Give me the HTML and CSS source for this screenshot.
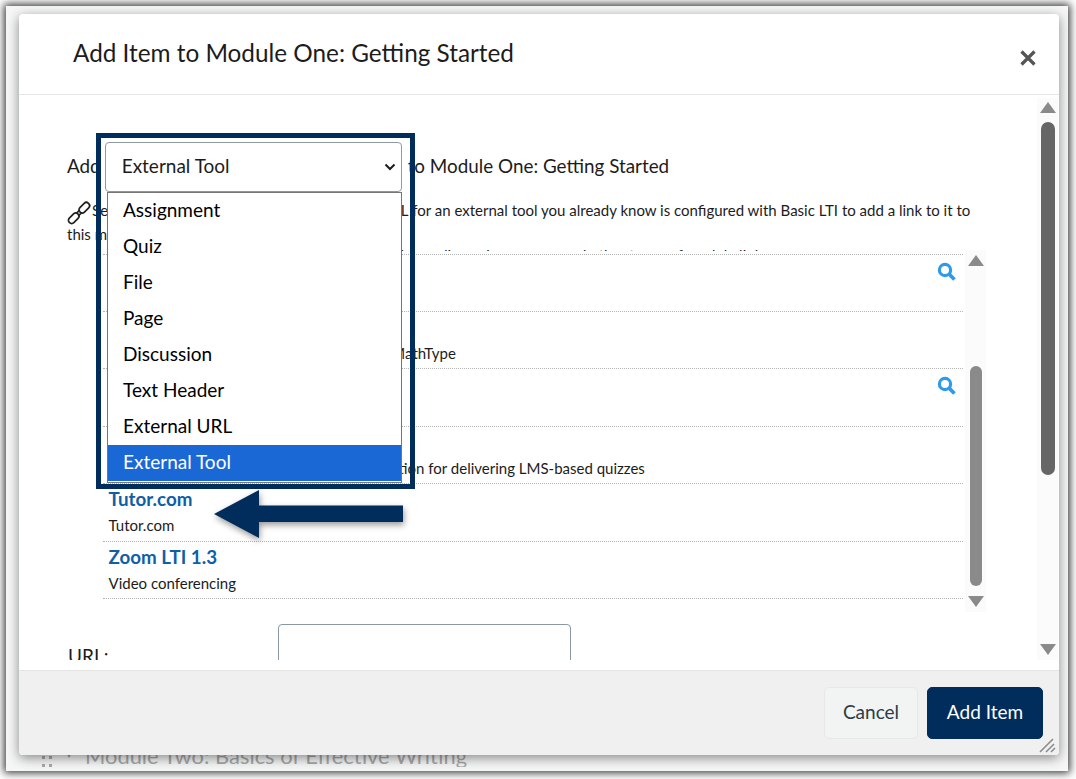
FILE: index.html
```html
<!DOCTYPE html>
<html lang="en">
<head>
<meta charset="utf-8">
<title>Add Item to Module</title>
<link rel="stylesheet" href="styles.css">
</head>
<body>
<div class="frame">
  <div class="page-behind">
    <span class="drag">
      <svg width="10" height="12" viewBox="0 0 10 12"><g fill="#a9a9a9"><rect x="0" y="0" width="3" height="3"/><rect x="7" y="0" width="3" height="3"/><rect x="0" y="8" width="3" height="3"/><rect x="7" y="8" width="3" height="3"/></g></svg>
    </span>
    <span class="caret"></span>
    <span class="module-name">Module Two: Basics of Effective Writing</span>
  </div>

  <div class="modal">
    <header class="modal-head">
      <h1 class="modal-title">Add Item to Module One: Getting Started</h1>
      <svg class="close" width="16" height="16" viewBox="0 0 16 16"><path d="M1.5 1.5 L14.5 14.5 M14.5 1.5 L1.5 14.5" stroke="#555" stroke-width="3.2" fill="none"/></svg>
    </header>

    <div class="modal-body">
      <div class="body-scroll">
        <div class="add-line">
          <span>Add</span>
          <div class="select">
            <span>External Tool</span>
            <svg width="12" height="8" viewBox="0 0 12 8"><path d="M1.5 1.5 L6 6 L10.5 1.5" stroke="#1c1c1c" stroke-width="2" fill="none"/></svg>
          </div>
          <span>to Module One: Getting Started</span>
        </div>

        <p class="intro">
          <svg class="link-icon" width="24" height="24" viewBox="0 0 24 24"><g fill="#fff" stroke="#222" stroke-width="1.7" transform="rotate(-45 12 12)"><rect x="8" y="10.4" width="8" height="3.2"/><rect x="-1.5" y="8.8" width="12" height="6.4" rx="3"/><rect x="13.5" y="8.8" width="12" height="6.4" rx="3"/></g></svg><span class="lead">Select a tool from the list below, or enter a URL</span> for an external tool you already know is configured with Basic LTI to add a link to it to this module.
        </p>

        <p class="clipped-line"><span>or use one of the configured tools, assignments, quizzes, discussions, pages and other types of module links</span></p>

        <div class="tool-box">
          <ul class="tool-list">
            <li class="tool">
              <a class="tool-name">Google Apps</a>
              <span class="tool-desc">Google Apps</span>
              <svg class="search" width="20" height="20" viewBox="0 0 20 20"><circle cx="8" cy="8" r="5.6" fill="none" stroke="#2e9bea" stroke-width="3.2"/><path d="M12.5 12.5 L17.5 17.5" stroke="#2e9bea" stroke-width="3.8"/></svg>
            </li>
            <li class="tool">
              <a class="tool-name">MathType</a>
              <span class="tool-desc">Write math equations in your content with MathType</span>
            </li>
            <li class="tool">
              <a class="tool-name">Proctoring</a>
              <span class="tool-desc">Proctoring</span>
              <svg class="search" width="20" height="20" viewBox="0 0 20 20"><circle cx="8" cy="8" r="5.6" fill="none" stroke="#2e9bea" stroke-width="3.2"/><path d="M12.5 12.5 L17.5 17.5" stroke="#2e9bea" stroke-width="3.8"/></svg>
            </li>
            <li class="tool">
              <a class="tool-name">Quizzes</a>
              <span class="tool-desc">A comprehensive exam and assessment solution for delivering LMS-based quizzes</span>
            </li>
            <li class="tool">
              <a class="tool-name">Tutor.com</a>
              <span class="tool-desc">Tutor.com</span>
            </li>
            <li class="tool">
              <a class="tool-name">Zoom LTI 1.3</a>
              <span class="tool-desc">Video conferencing</span>
            </li>
          </ul>
          <div class="scrollbar inner-bar">
            <span class="arrow up"></span>
            <span class="thumb-space"><span class="thumb"></span></span>
            <span class="arrow down"></span>
          </div>
        </div>

        <div class="url-row">
          <label class="url-label">URL:</label>
          <div class="url-input"></div>
        </div>
      </div>
      <div class="scrollbar outer-bar">
        <span class="arrow up"></span>
        <span class="thumb-space"><span class="thumb"></span></span>
        <span class="arrow down"></span>
      </div>
    </div>

    <footer class="modal-foot">
      <button class="btn cancel">Cancel</button>
      <button class="btn primary">Add Item</button>
      <svg class="grip" width="18" height="16" viewBox="0 0 18 16"><path d="M2 15 L15 2 M8 15 L16 7 M13 15 L17 11" stroke="#8c8c8c" stroke-width="1.6" fill="none"/></svg>
    </footer>
  </div>

  <ul class="menu">
    <li>Assignment</li>
    <li>Quiz</li>
    <li>File</li>
    <li>Page</li>
    <li>Discussion</li>
    <li>Text Header</li>
    <li>External URL</li>
    <li class="selected">External Tool</li>
  </ul>
  <div class="callout-box"></div>
  <svg class="callout-arrow" width="192" height="50" viewBox="0 0 192 50"><path d="M0 24 L45 0 V15.5 H189 V32 H45 V48 Z" fill="#012d5c"/></svg>
</div>
</body>
</html>
```
FILE: styles.css
```css
* { box-sizing: border-box; }
html, body { margin: 0; padding: 0; background: #fff; }
body { width: 1076px; height: 779px; overflow: hidden; padding-top: 6px; font-family: Lato, "Liberation Sans", sans-serif; color: #1c1c1c; }

.frame {
  position: relative;
  width: 1062px;
  height: 765px;
  margin: 0 0 0 6px;
  padding-top: 737px;
  background: #f5f6f6;
  box-shadow: 0 0 8px 2px #3a3a3a;
  overflow: visible;
}
.page-behind {
  display: flex;
  align-items: center;
  height: 24px;
  padding-left: 36px;
  color: #a8a8a8;
  overflow: hidden;
  white-space: nowrap;
}
.drag { display: flex; margin-top: 14px; width: 23px; }
.caret { width: 0; height: 0; margin-top: -2px; margin-right: 12px; border-left: 4px solid transparent; border-right: 4px solid transparent; border-top: 7px solid #a0a0a0; }
.module-name { font-size: 21.9px; }

.modal {
  position: absolute;
  left: 13px;
  top: 8px;
  width: 1040px;
  height: 741px;
  display: flex;
  flex-direction: column;
  background: #fff;
  border-radius: 4px;
  box-shadow: 0 3px 12px rgba(0,0,0,.45);
  overflow: hidden;
}
.modal-head {
  flex: none;
  height: 81px;
  display: flex;
  justify-content: space-between;
  padding: 24px 23px 0 54px;
  border-bottom: 1px solid #e6e6e6;
}
.modal-title { margin: 0; font-size: 24.3px; line-height: 29px; font-weight: 400; }
.close { margin-top: 12px; }

.modal-body { flex: none; height: 575px; display: flex; justify-content: space-between; }
.body-scroll { width: 1017px; height: 565px; padding: 47px 0 0 48px; overflow: hidden; }
.add-line { display: flex; align-items: center; gap: 4px; font-size: 18.85px; height: 50px; }
.add-line > span { padding-bottom: 3px; }
.add-line > span:last-child { margin-left: 2px; }
.select {
  width: 297px;
  height: 50px;
  display: flex;
  align-items: center;
  justify-content: space-between;
  padding: 0 5px 0 16px;
  background: #fff;
  border: 1px solid #8f99a3;
  border-radius: 4px;
  font-size: 19px;
  position: relative;
  z-index: 2;
}
.select span { padding-bottom: 3px; }
.intro { margin: 6px 0 0; width: 910px; font-size: 15px; line-height: 24px; }
.lead { letter-spacing: .12px; }
.link-icon { vertical-align: -3px; margin: -6px 1px -6px 0; overflow: visible; }
.clipped-line { margin: 0; height: 5px; overflow: hidden; font-size: 15px; line-height: 24px; }
.clipped-line span { display: block; margin-top: -3px; white-space: nowrap; }

.tool-box { display: flex; width: 920px; height: 362px; margin: 3px 0 0 36px; }
.tool-list { list-style: none; margin: 0; padding: 0; width: 860px; height: 346px; }
.tool {
  position: relative;
  height: 57.5px;
  padding: 2px 0 0 5.5px;
  border-bottom: 1px dotted #b5b5b5;
  display: flex;
  flex-direction: column;
}
.tool:first-child { border-top: 1px dotted #b5b5b5; }
.tool-name { color: #0f5fa6; font-size: 18.8px; font-weight: 700; line-height: 26px; }
.tool-desc { font-size: 15px; line-height: 26px; }
.search { position: absolute; right: 6px; top: 7px; }

.scrollbar { display: flex; flex-direction: column; align-items: center; background: #fbfbfb; flex: none; }
.arrow { display: block; width: 0; height: 0; flex: none; border-left: 8px solid transparent; border-right: 8px solid transparent; }
.arrow.up { border-bottom: 11px solid #8a8a8a; }
.arrow.down { border-top: 11px solid #8a8a8a; }
.thumb-space { flex: 1; width: 100%; display: flex; flex-direction: column; align-items: center; }
.thumb { display: block; border-radius: 7px; }

.inner-bar { width: 21px; height: 362px; margin: -4px 0 0 2px; padding: 5px 0; }
.inner-bar .thumb-space { padding-top: 100px; }
.inner-bar .thumb { width: 12px; height: 220px; background: #8a8a8a; }

.outer-bar { width: 21px; height: 562px; margin: 3px 1px 0 0; padding: 4px 0 5px; }
.outer-bar .thumb-space { padding-top: 9px; }
.outer-bar .thumb { width: 14px; height: 353px; background: #666; }

.url-row { display: flex; height: 40px; margin-top: 8px; font-size: 19px; }
.url-label { width: 211px; padding-top: 20px; padding-left: 1px; }
.url-input { width: 293px; height: 60px; border: 1px solid #8a97a5; border-radius: 4px; background: #fff; }

.modal-foot {
  position: relative;
  flex: 1;
  display: flex;
  justify-content: flex-end;
  gap: 9px;
  align-items: flex-start;
  padding: 16px 16px 0 0;
  background: #f0f0f0;
  border-top: 1px solid #e4e4e4;
}
.btn { height: 52px; border-radius: 5px; font-family: inherit; font-size: 19px; padding: 0 0 4px; }
.cancel { width: 94px; background: #f2f4f4; border: 1px solid #e7e9e9; color: #2d3b45; }
.primary { width: 116px; background: #012d5c; border: 1px solid #012d5c; color: #fff; }
.grip { position: absolute; right: 3px; bottom: 2px; }

.menu {
  position: absolute;
  left: 101px;
  top: 186px;
  width: 295px;
  height: 291px;
  margin: 0;
  padding: 0 0 2px;
  list-style: none;
  background: #fff;
  border: 1px solid #767676;
  font-size: 19px;
  z-index: 3;
}
.menu li { height: 36px; line-height: 34px; padding-left: 15px; color: #000; }
.menu li.selected { background: #1a68d6; color: #fff; }

.callout-box {
  position: absolute;
  left: 90px;
  top: 127px;
  width: 319px;
  height: 356px;
  border: 5px solid #012d5c;
  z-index: 4;
  pointer-events: none;
}
.callout-arrow {
  position: absolute;
  left: 208px;
  top: 484px;
  z-index: 4;
  filter: drop-shadow(1px 3px 3px rgba(0,0,0,.4));
  overflow: visible;
}
```
